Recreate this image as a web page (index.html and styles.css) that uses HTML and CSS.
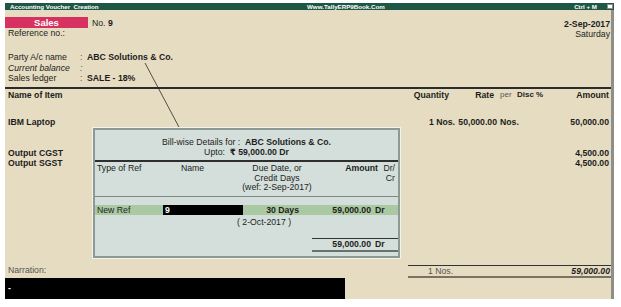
FILE: index.html
```html
<!DOCTYPE html>
<html lang="en">
<head>
  <meta charset="UTF-8" />
  <title>Accounting Voucher Creation</title>
  <meta name="viewport" content="width=device-width, initial-scale=1.0" />
  <link rel="stylesheet" href="styles.css">
</head>
<body>

  <div class="window">

    <!-- Title bar -->
    <div class="titlebar">
      <span class="tb-left">Accounting Voucher&nbsp; Creation</span>
      <span class="tb-center">Www.TallyERP9Book.Com</span>
      <span class="tb-right">Ctrl + M <span class="tb-box"></span></span>
    </div>

    <div class="main">

      <!-- Voucher header -->
      <div class="voucher-head">
        <div class="head-left">
          <div class="type-row">
            <span class="vtype">Sales</span>
            <span class="vno">No. <b>9</b></span>
          </div>
          <div class="ref">Reference no.:</div>
          <div class="party">
            <div class="field"><span class="label">Party A/c name</span><span class="colon">:</span><b>ABC Solutions &amp; Co.</b></div>
            <div class="field italic"><span class="label">Current balance</span><span class="colon">:</span></div>
            <div class="field"><span class="label">Sales ledger</span><span class="colon">:</span><b>SALE - 18%</b></div>
          </div>
        </div>
        <div class="head-right">
          <div class="date">2-Sep-2017</div>
          <div>Saturday</div>
        </div>
      </div>

      <!-- Column headings -->
      <div class="cols col-head">
        <span>Name of Item</span>
        <span class="num h-qty">Quantity</span>
        <span class="num h-rate">Rate</span>
        <span class="h-per">per</span>
        <span class="h-disc">Disc %</span>
        <span class="num">Amount</span>
      </div>

      <!-- Items -->
      <div class="items">
        <div class="cols item first">
          <span>IBM Laptop</span>
          <span class="num">1 Nos.</span>
          <span class="num">50,000.00</span>
          <span class="per">Nos.</span>
          <span></span>
          <span class="num">50,000.00</span>
        </div>
        <div class="cols item gap">
          <span>Output CGST</span>
          <span></span><span></span><span></span><span></span>
          <span class="num">4,500.00</span>
        </div>
        <div class="cols item">
          <span>Output SGST</span>
          <span></span><span></span><span></span><span></span>
          <span class="num">4,500.00</span>
        </div>
      </div>

      <!-- Narration and totals -->
      <div class="foot">
        <div class="narration">Narration:</div>
        <div class="totals">
          <span class="t-qty">1 Nos.</span>
          <span class="t-amt">59,000.00</span>
        </div>
      </div>

      <div class="cmdbar">-</div>
    </div>

    <!-- Pointer from party name to the popup -->
    <svg class="pointer" width="621" height="307" viewBox="0 0 621 307">
      <line x1="145" y1="63" x2="180" y2="129" stroke="#2a2a2a" stroke-width="0.8" />
    </svg>

    <!-- Bill-wise details popup -->
    <div class="billwise">
      <div class="bw-title">
        <div>Bill-wise Details for :&nbsp; <b>ABC Solutions &amp; Co.</b></div>
        <div>Upto:&nbsp; <b>₹ 59,000.00 Dr</b></div>
      </div>
      <div class="bw-rule"></div>
      <div class="bw-head">
        <span class="c-type">Type of Ref</span>
        <span class="c-center">Name</span>
        <span class="c-center">Due Date, or<br>Credit Days<br>(wef: 2-Sep-2017)</span>
        <span class="c-amt">Amount</span>
        <span class="c-dr">Dr/<br>Cr</span>
      </div>
      <div class="bw-row">
        <span class="c-type">New Ref</span>
        <span class="c-name">9</span>
        <span class="c-due">30 Days</span>
        <span class="c-val">59,000.00</span>
        <span class="c-drv">Dr</span>
      </div>
      <div class="bw-sub">( 2-Oct-2017 )</div>
      <div class="bw-total">
        <span class="c-val">59,000.00</span>
        <span class="c-drv">Dr</span>
      </div>
    </div>

  </div>

</body>
</html>
```

FILE: styles.css
```css
/* Reset */
* {
  box-sizing: border-box;
  margin: 0;
  padding: 0;
}
body {
  background: #fff;
  font-family: "Liberation Sans", "DejaVu Sans", Arial, sans-serif;
  font-size: 8.7px;
  line-height: 10px;
  color: #1d1d1b;
}

/* Window frame */
.window {
  position: relative;
  width: 609px;
  margin: 3px 0 0 5px;
}

/* Title bar */
.titlebar {
  display: flex;
  height: 7px;
  background: #1f5747;
  color: #fff;
  font-size: 6.2px;
  font-weight: bold;
  line-height: 7px;
}
.tb-left {
  width: 302px;
  padding-left: 5px;
}
.tb-center {
  flex: 1;
}
.tb-right {
  display: flex;
  align-items: center;
  gap: 10px;
  padding-right: 1px;
}
.tb-box {
  width: 6px;
  height: 5px;
  background: #fff;
  border: 1px solid #8a8a8a;
}

/* Main voucher area */
.main {
  height: 289px;
  background: #e5dcc2;
  border-right: 3px solid #8f8e87;
  display: flex;
  flex-direction: column;
}

/* Header block */
.voucher-head {
  height: 77px;
  display: flex;
  justify-content: space-between;
}
.head-left {
  padding-top: 7px;
}
.type-row {
  display: flex;
  height: 11px;
  align-items: center;
}
.vtype {
  width: 83px;
  height: 11px;
  background: #d63160;
  color: #fff;
  font-weight: bold;
  text-align: center;
  font-size: 9.5px;
  line-height: 11px;
}
.vno {
  margin-left: 4px;
}
.ref {
  padding-left: 3px;
}
.party {
  margin-top: 14px;
  padding-left: 3px;
}
.field {
  display: flex;
  line-height: 10.5px;
}
.field.italic {
  font-style: italic;
}
.label {
  width: 72px;
}
.colon {
  width: 7px;
  color: #555;
}
.head-right {
  padding: 9px 1px 0 0;
  text-align: right;
}
.date {
  font-weight: bold;
}

/* Item columns */
.cols {
  display: grid;
  grid-template-columns: 387px 60px 42px 19px 29px 64px;
  padding-left: 3px;
}
.num {
  text-align: right;
}
.col-head {
  border-top: 2px solid #2b2b2b;
  height: 13px;
  padding-top: 0.5px;
  font-weight: bold;
}
.h-qty {
  padding-right: 6px;
}
.h-rate {
  padding-right: 3px;
}
.h-per {
  font-weight: normal;
  color: #555;
  font-size: 8px;
  padding-left: 3px;
}
.h-disc {
  font-size: 8px;
  padding-left: 1px;
}
.items {
  flex: 1;
}
.item {
  height: 10px;
  font-weight: bold;
}
.item.first {
  margin-top: 17px;
}
.item.gap {
  margin-top: 21px;
}
.per {
  padding-left: 3px;
}

/* Narration and totals */
.foot {
  display: flex;
  height: 13px;
}
.narration {
  flex: 1;
  padding-left: 3px;
  color: #555;
}
.totals {
  width: 203px;
  display: flex;
  justify-content: space-between;
  padding: 0 1px 0 20px;
  border-top: 1px solid #333;
  border-bottom: 2px solid #7b7262;
}
.t-qty {
  color: #555;
}
.t-amt {
  font-weight: bold;
  font-style: italic;
}
.cmdbar {
  width: 340px;
  height: 21px;
  background: #000;
  color: #fff;
  font-weight: bold;
  padding: 5px 0 0 3px;
}

/* Connector line */
.pointer {
  position: absolute;
  top: -3px;
  left: -5px;
  pointer-events: none;
}

/* Bill-wise popup */
.billwise {
  position: absolute;
  left: 88px;
  top: 125px;
  width: 307px;
  height: 130px;
  background: #d4dfdc;
  border: 2px solid #8c9995;
  box-shadow: 0 0 0 1px #f3f3ee;
}
.bw-title {
  text-align: center;
  padding-top: 7px;
}
.bw-rule {
  border-top: 2px solid #2e2e2e;
  margin-top: 3px;
}
.bw-head {
  display: grid;
  grid-template-columns: 65px 65px 104px 49px 20px;
  line-height: 9.5px;
  padding: 2px 0 3.5px 0;
  border-bottom: 1px solid #7d8884;
}
.c-type {
  padding-left: 2px;
}
.c-center {
  text-align: center;
}
.c-amt {
  text-align: right;
  font-weight: bold;
}
.c-dr {
  text-align: right;
  padding-right: 3px;
}
.bw-row {
  display: grid;
  grid-template-columns: 68px 80px 57px 71px 27px;
  height: 10px;
  margin-top: 8px;
  background: #a9c9a3;
}
.c-name {
  background: #000;
  color: #fff;
  font-weight: bold;
  padding-left: 2px;
}
.c-due {
  text-align: right;
  font-weight: bold;
  padding-right: 1px;
}
.c-val {
  text-align: right;
  font-weight: bold;
}
.c-drv {
  font-weight: bold;
  padding-left: 4px;
}
.bw-sub {
  padding-left: 142px;
  margin-top: 2px;
}
.bw-total {
  display: grid;
  grid-template-columns: 59px 27px;
  margin: 11px 0 0 217px;
  padding-bottom: 1px;
  border-top: 1px solid #333;
  border-bottom: 2px solid #69716e;
}
```
